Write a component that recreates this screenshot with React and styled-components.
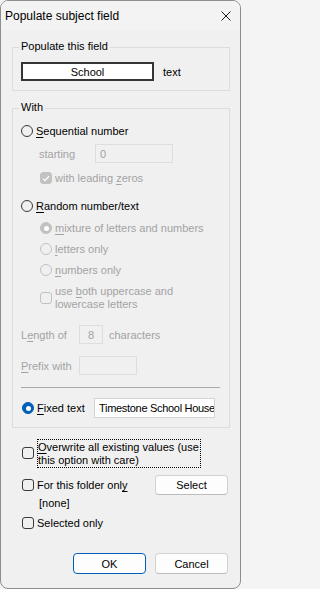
import React from 'react';
import styled, { createGlobalStyle, css } from 'styled-components';

const GlobalStyle = createGlobalStyle`
  html, body { margin: 0; padding: 0; background: #f4f4f4; }
  body {
    font-family: "Liberation Sans", Arial, sans-serif;
    font-size: 11px;
    color: #000;
  }
  * { box-sizing: border-box; }
`;

const Window = styled.div`
  width: 241px;
  height: 589px;
  background: #f0f0f0;
  border: 1px solid #8e8e8e;
  border-radius: 8px;
  overflow: hidden;
  display: flex;
  flex-direction: column;
`;

const TitleBar = styled.div`
  height: 29px;
  flex: none;
  display: flex;
  align-items: center;
  justify-content: space-between;
  padding: 0 9px 0 4px;
  background: #f3f3f3;
`;

const Title = styled.span`
  font-size: 12px;
  line-height: 14px;
`;

const Body = styled.div`
  display: flex;
  flex-direction: column;
  padding: 0 10px 0 11px;
`;

const Group = styled.fieldset`
  margin: ${p => p.$mt}px 0 0;
  min-width: 0;
  border: 1px solid #dcdcdc;
  padding: ${p => p.$pt}px 9px ${p => p.$pb}px 8px;
  display: flex;
  flex-direction: column;
`;

const Legend = styled.legend`
  padding: 0 2px 2px;
  margin-left: -2px;
  line-height: 14px;
`;

const Row = styled.div`
  display: flex;
  align-items: center;
  height: ${p => p.$h || 18}px;
  margin-top: ${p => p.$mt || 0}px;
  padding-left: ${p => p.$indent || 0}px;
  gap: ${p => p.$gap ?? 3}px;
`;

const Label = styled.span`
  line-height: ${p => p.$lh || 14}px;
  white-space: nowrap;
  color: ${p => (p.$disabled ? '#a3a3a3' : '#000')};
  ${p => p.$w && css`width: ${p.$w}px; flex: none;`}
`;

const Key = styled.span`
  text-decoration: underline;
  text-underline-offset: 2px;
  text-decoration-thickness: 1px;
`;

const FieldButton = styled.div`
  width: 133px;
  height: 19px;
  border: 2px solid #353535;
  background: #fff;
  display: flex;
  align-items: center;
  justify-content: center;
  line-height: 14px;
`;

const TextBox = styled.div`
  width: ${p => p.$w}px;
  height: ${p => p.$h || 19}px;
  flex: none;
  border: 1px solid ${p => (p.$disabled ? '#dedede' : '#d4d4d4')};
  background: ${p => (p.$disabled ? '#f0f0f0' : '#fff')};
  color: ${p => (p.$disabled ? '#a3a3a3' : '#000')};
  display: flex;
  align-items: center;
  justify-content: ${p => (p.$center ? 'center' : 'flex-start')};
  padding: 0 ${p => (p.$center ? 0 : 4)}px;
  line-height: 14px;
  white-space: nowrap;
  overflow: hidden;
  letter-spacing: ${p => (p.$tight ? '-0.3px' : 'normal')};
  ${p => p.$mr && css`margin-right: ${p.$mr}px;`}
`;

const Radio = styled.span`
  width: 12px;
  height: 12px;
  flex: none;
  border-radius: 50%;
  position: relative;
  border: 1px solid ${p => (p.$disabled ? '#c2c2c2' : '#3a3a3a')};
  background: ${p => (p.$checked ? (p.$disabled ? '#c2c2c2' : '#005fb8') : 'transparent')};
  ${p => p.$checked && css`border-color: ${p.$disabled ? '#c2c2c2' : '#005fb8'};`}
  ${p =>
    p.$checked &&
    css`
      &::after {
        content: '';
        position: absolute;
        left: 50%;
        top: 50%;
        width: 5px;
        height: 5px;
        margin: -2.5px 0 0 -2.5px;
        border-radius: 50%;
        background: #fff;
      }
    `}
`;

const Check = styled.span`
  width: 12px;
  height: 12px;
  flex: none;
  border-radius: 3px;
  border: 1px solid ${p => (p.$disabled ? '#c2c2c2' : '#3a3a3a')};
  background: ${p => (p.$checked ? '#c2c2c2' : 'transparent')};
  display: flex;
  align-items: center;
  justify-content: center;
`;

const Separator = styled.div`
  height: 1px;
  background: #a9a9a9;
  margin-top: ${p => p.$mt}px;
`;

const Options = styled.div`
  display: flex;
  flex-direction: column;
  padding: 0 2px 0 10px;
`;

const FocusLabel = styled.span`
  border: 1px dotted #000;
  padding: 1px 0 0 0;
  line-height: 13px;
  width: 164px;
  white-space: nowrap;
`;

const Spacer = styled.div`
  flex: 1;
`;

const Button = styled.button`
  width: 73px;
  height: ${p => p.$h || 21}px;
  flex: none;
  font: inherit;
  line-height: 14px;
  color: #000;
  background: #fdfdfd;
  border: 1px solid ${p => (p.$primary ? '#005fb8' : '#d2d2d2')};
  border-bottom-color: ${p => (p.$primary ? '#005fb8' : '#bdbdbd')};
  border-radius: 4px;
  padding: 0;
`;

const ButtonRow = styled.div`
  display: flex;
  justify-content: flex-end;
  gap: 9px;
  margin-top: 21px;
`;

const CheckMark = () => (
  <svg width="8" height="7" viewBox="0 0 8 7">
    <path d="M1 3.6 L3 5.6 L7 1.2" fill="none" stroke="#fff" strokeWidth="1.3" />
  </svg>
);

const CloseIcon = () => (
  <svg width="10" height="10" viewBox="0 0 10 10">
    <path d="M0.5 0.5 L9.5 9.5 M9.5 0.5 L0.5 9.5" stroke="#1a1a1a" strokeWidth="1" fill="none" />
  </svg>
);

export default function App() {
  return (
    <>
      <GlobalStyle />
      <Window>
        <TitleBar>
          <Title>Populate subject field</Title>
          <CloseIcon />
        </TitleBar>
        <Body>
          <Group $mt={9} $pt={7} $pb={9}>
            <Legend>Populate this field</Legend>
            <Row $h={19} $gap={9}>
              <FieldButton>School</FieldButton>
              <Label>text</Label>
            </Row>
          </Group>

          <Group $mt={9} $pt={6} $pb={9}>
            <Legend>With</Legend>
            <Row>
              <Radio />
              <Label><Key>S</Key>equential number</Label>
            </Row>
            <Row $h={19} $mt={4} $indent={18} $gap={0}>
              <Label $disabled $w={56}>starting</Label>
              <TextBox $w={78} $disabled>0</TextBox>
            </Row>
            <Row $mt={6} $indent={19}>
              <Check $checked $disabled><CheckMark /></Check>
              <Label $disabled>with leading <Key>z</Key>eros</Label>
            </Row>
            <Row $mt={10}>
              <Radio />
              <Label><Key>R</Key>andom number/text</Label>
            </Row>
            <Row $mt={4} $indent={19}>
              <Radio $checked $disabled />
              <Label $disabled><Key>m</Key>ixture of letters and numbers</Label>
            </Row>
            <Row $mt={3} $indent={19}>
              <Radio $disabled />
              <Label $disabled><Key>l</Key>etters only</Label>
            </Row>
            <Row $mt={3} $indent={19}>
              <Radio $disabled />
              <Label $disabled><Key>n</Key>umbers only</Label>
            </Row>
            <Row $h={26} $mt={6} $indent={19}>
              <Check $disabled />
              <Label $disabled $lh={13}>
                use <Key>b</Key>oth uppercase and
                <br />
                lowercase letters
              </Label>
            </Row>
            <Row $h={19} $mt={14} $gap={0}>
              <Label $disabled $w={58}>L<Key>e</Key>ngth of</Label>
              <TextBox $w={24} $disabled $center $mr={6}>8</TextBox>
              <Label $disabled>characters</Label>
            </Row>
            <Row $h={19} $mt={12} $gap={0}>
              <Label $disabled $w={58}><Key>P</Key>refix with</Label>
              <TextBox $w={58} $disabled />
            </Row>
            <Separator $mt={12} />
            <Row $h={20} $mt={10} $indent={1} $gap={3}>
              <Radio $checked />
              <Label $w={54}><Key>F</Key>ixed text</Label>
              <TextBox $w={121} $h={20} $tight>Timestone School House</TextBox>
            </Row>
          </Group>

          <Options>
            <Row $h={28} $mt={11}>
              <Check />
              <FocusLabel>
                <Key>O</Key>verwrite all existing values (use
                <br />
                this option with care)
              </FocusLabel>
            </Row>
            <Row $h={20} $mt={8}>
              <Check />
              <Label>For this folder onl<Key>y</Key></Label>
              <Spacer />
              <Button $h={20}>Select</Button>
            </Row>
            <Row $h={14} $mt={1} $indent={17}>
              <Label>[none]</Label>
            </Row>
            <Row $mt={4}>
              <Check />
              <Label>Selected only</Label>
            </Row>
            <ButtonRow>
              <Button $primary>OK</Button>
              <Button>Cancel</Button>
            </ButtonRow>
          </Options>
        </Body>
      </Window>
    </>
  );
}
